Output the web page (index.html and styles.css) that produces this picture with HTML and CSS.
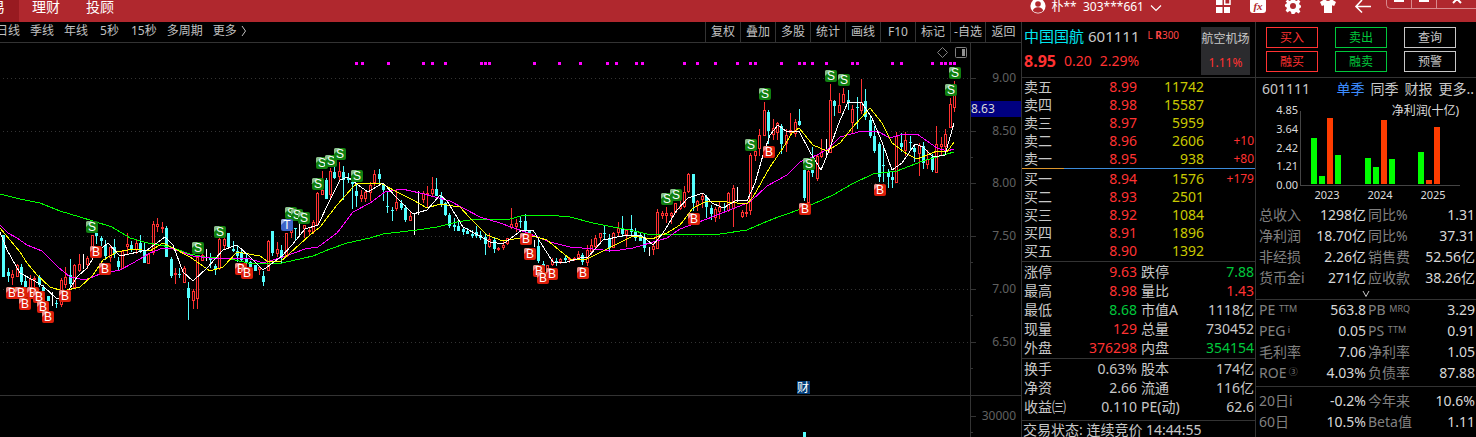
FILE: index.html
```html
<!DOCTYPE html>
<html lang="zh-CN">
<head>
<meta charset="utf-8">
<title>中国国航 601111</title>
<link rel="stylesheet" href="styles.css">
</head>
<body>
<header class="topbar">
  <nav class="tabs">
    <a class="tab tab-active" href="#">交易</a>
    <a class="tab" href="#">理财</a>
    <a class="tab" href="#">投顾</a>
  </nav>
  <div class="account">
    <svg class="avatar" viewBox="0 0 16 16"><circle cx="8" cy="8" r="7.6" fill="#fff"/><circle cx="8" cy="6" r="2.8" fill="#b0282e"/><path d="M3 13c0-5 10-5 10 0-2.800 2.300-7.200 2.300-10 0z" fill="#b0282e"/></svg>
    <span>朴**&nbsp; 303***661</span>
    <svg class="caret" viewBox="0 0 12 8"><path d="M1 1.500l5 5 5-5" fill="none" stroke="#fff" stroke-width="1.200"/></svg>
  </div>
  <div class="tools">
    <button class="tool" aria-label="应用"><svg viewBox="0 0 16 16"><path d="M1 0h6.500v5H1zM1 7h6.500v6H1zM9 7h6v6H9z" fill="#fff"/><path d="M9.700 0v4.300H15V0" fill="none" stroke="#fff" stroke-width="1.500"/></svg></button>
    <button class="tool" aria-label="公式"><svg viewBox="0 0 16 16"><rect y="-2" width="16" height="15" rx="3" fill="#fff"/><text x="8" y="10" class="fx">fx</text></svg></button>
    <button class="tool" aria-label="设置"><svg viewBox="0 0 16 16"><path transform="translate(0 -2)" d="M6.500 0h3l.5 2.300 1.500.6 2-1.300 1.900 1.900-1.300 2 .6 1.500 1.300.5v2l-1.300.5-.6 1.500 1.300 2-1.900 1.900-2-1.300-1.500.6L9.500 16h-3L6 13.700l-1.500-.6-2 1.300-1.900-1.900 1.300-2L1.300 9 0 8.500v-2L1.300 6l.6-1.500L.6 3.500 2.500 1.600l2 1.300L6 2.300z" fill="#fff"/><circle cx="8" cy="6" r="3" fill="#b0282e"/></svg></button>
    <button class="tool" aria-label="皮肤"><svg viewBox="0 0 16 16"><path d="M5-1c1 2.500 5 2.500 6 0l5 3-1.800 4-2.200-.8V13H4V5.200L1.800 6 0 2z" fill="#fff"/></svg></button>
    <button class="tool" aria-label="返回"><svg viewBox="0 0 16 16"><path d="M16 6.500H1M7 0L1 6.500 7 12.500" fill="none" stroke="#fff" stroke-width="1.600"/></svg></button>
  </div>
  <div class="window">
    <button aria-label="最小化"><svg viewBox="0 0 10 10"><path d="M0 0h10v2H0z" fill="#fff"/></svg></button>
    <button aria-label="最大化"><svg viewBox="0 0 10 10"><path d="M0 0h10v2H0z" fill="#fff"/></svg></button>
    <button class="close" aria-label="关闭"><svg viewBox="0 0 10 10"><path d="M1 3l4-4 4 4" fill="none" stroke="#fff" stroke-width="2"/></svg></button>
  </div>
</header>

<main class="main">
  <section class="chart">
    <div class="toolbar">
      <div class="periods">
        <button>日线</button><button>季线</button><button>年线</button><button class="short">5秒</button><button class="short">15秒</button><button>多周期</button><button class="more">更多
          <svg viewBox="0 0 6 12"><path d="M1 1l3.500 5L1 11" fill="none" stroke="#c0c0c0"/></svg></button>
      </div>
      <div class="actions">
        <button>复权</button><button>叠加</button><button>多股</button><button>统计</button><button>画线</button><button>F10</button><button>标记</button><button>-自选</button><button>返回</button>
      </div>
    </div>
    <svg class="kline" id="kline" viewBox="0 43 1021 394" preserveAspectRatio="xMaxYMin slice"></svg>
  </section>

  <section class="quote">
    <div class="head">
      <div>
        <div class="name"><b>中国国航</b><span>601111</span><small>L <strong>R</strong>300</small></div>
        <div class="price red"><b>8.95</b><span>0.20</span><span>2.29%</span></div>
      </div>
      <div class="sector"><span>航空机场</span><span class="red">1.11%</span></div>
    </div>
    <table class="book">
      <tr><th>卖五</th><td>8.99</td><td>11742</td><td></td></tr>
      <tr><th>卖四</th><td>8.98</td><td>15587</td><td></td></tr>
      <tr><th>卖三</th><td>8.97</td><td>5959</td><td></td></tr>
      <tr><th>卖二</th><td>8.96</td><td>2606</td><td>+10</td></tr>
      <tr><th>卖一</th><td>8.95</td><td>938</td><td>+80</td></tr>
    </table>
    <div class="ratio"><i></i></div>
    <table class="book bids">
      <tr><th>买一</th><td>8.94</td><td>1576</td><td>+179</td></tr>
      <tr><th>买二</th><td>8.93</td><td>2501</td><td></td></tr>
      <tr><th>买三</th><td>8.92</td><td>1084</td><td></td></tr>
      <tr><th>买四</th><td>8.91</td><td>1896</td><td></td></tr>
      <tr><th>买五</th><td>8.90</td><td>1392</td><td></td></tr>
    </table>
    <table class="stats">
      <tr><th>涨停</th><td class="red">9.63</td><th>跌停</th><td class="green">7.88</td></tr>
      <tr><th>最高</th><td class="red">8.98</td><th>量比</th><td class="red">1.43</td></tr>
      <tr><th>最低</th><td class="green">8.68</td><th>市值A</th><td>1118亿</td></tr>
      <tr><th>现量</th><td class="red">129</td><th>总量</th><td>730452</td></tr>
      <tr><th>外盘</th><td class="red">376298</td><th>内盘</th><td class="green">354154</td></tr>
    </table>
    <table class="stats">
      <tr><th>换手</th><td>0.63%</td><th>股本</th><td>174亿</td></tr>
      <tr><th>净资</th><td>2.66</td><th>流通</th><td>116亿</td></tr>
      <tr><th>收益㈢</th><td>0.110</td><th>PE(动)</th><td>62.6</td></tr>
    </table>
    <div class="status">交易状态: 连续竞价 14:44:55</div>
  </section>

  <section class="finance">
    <div class="trade">
      <button class="red">买入</button><button class="green">卖出</button><button>查询</button>
      <button class="red">融买</button><button class="green">融卖</button><button>预警</button>
    </div>
    <div class="report">
      <span class="code">601111</span>
      <button class="on">单季</button><button>同季</button><button>财报</button><button>更多..</button>
    </div>
    <svg class="profit" id="profit" viewBox="1256 101 220 103"></svg>
    <table class="fin">
      <tr><th>总收入</th><td>1298亿</td><th>同比%</th><td>1.31</td></tr>
      <tr><th>净利润</th><td>18.70亿</td><th>同比%</th><td>37.31</td></tr>
      <tr><th>非经损</th><td>2.26亿</td><th>销售费</th><td>52.56亿</td></tr>
      <tr><th>货币金i</th><td>271亿</td><th>应收款</th><td>38.26亿</td></tr>
    </table>
    <button class="expand" aria-label="展开"><svg viewBox="0 0 8 8"><path d="M1 1l3 5.500L7 1" fill="none" stroke="#c8c8c8"/></svg></button>
    <table class="fin ratios">
      <tr><th>PE <sup>TTM</sup></th><td>563.8</td><th>PB <sup>MRQ</sup></th><td>3.29</td></tr>
      <tr><th>PEG<sup> i</sup></th><td>0.05</td><th>PS <sup>TTM</sup></th><td>0.91</td></tr>
      <tr><th>毛利率</th><td>7.06</td><th>净利率</th><td>1.05</td></tr>
      <tr><th>ROE<sup> ③</sup></th><td>4.03%</td><th>负债率</th><td>87.88</td></tr>
    </table>
    <table class="fin returns">
      <tr><th>20日i</th><td>-0.2%</td><th>今年来</th><td>10.6%</td></tr>
      <tr><th>60日</th><td>10.5%</td><th>Beta值</th><td>1.11</td></tr>
    </table>
  </section>
</main>
<script src="chart.js"></script>
</body>
</html>
```
FILE: styles.css
```css
* { box-sizing: border-box; }
body {
  margin: 0;
  min-height: 100vh;
  display: flex;
  flex-direction: column;
  background: #000;
  color: #c8c8c8;
  font: 14px/18px "Noto Sans", "Noto Sans CJK SC", sans-serif;
  overflow: hidden;
}
button { border: 0; padding: 0; background: none; color: inherit; font: inherit; white-space: nowrap; }
svg { display: block; }
table { border-collapse: collapse; width: 100%; table-layout: fixed; }
th { font-weight: 400; text-align: left; padding: 0; white-space: nowrap; }
td { text-align: right; padding: 0; white-space: nowrap; }
.red { color: #ff3232; }
.green { color: #00c83c; }

.topbar { height: 22px; display: flex; background: #b0282e; color: #fff; overflow: hidden; }
.tabs { display: flex; flex: 1; }
.tab { color: #fff; text-decoration: none; line-height: 14px; padding: 0 13px; white-space: nowrap; }
.tab-active { flex: none; width: 19px; padding: 0 14px 0 0; display: flex; justify-content: flex-end; background: #981a20; overflow: hidden; }
.account { display: flex; gap: 6px; font-size: 12px; line-height: 13px; padding-right: 53px; }
.avatar { width: 16px; height: 16px; margin-top: -2px; }
.caret { width: 12px; height: 8px; margin-top: 4px; }
.tools { display: flex; gap: 19px; padding-right: 15px; }
.tool svg { width: 16px; height: 16px; overflow: visible; }
.tool { height: 16px; }
.fx { font: italic 700 11px "Liberation Serif", serif; fill: #b0282e; text-anchor: middle; }
.window { display: flex; height: 9px; width: 90px; border: 1px solid #d98a8d; border-width: 0 0 1px 1px; border-radius: 0 0 0 5px; }
.window button { width: 25px; height: 8px; border-right: 1px solid #d98a8d; display: flex; justify-content: center; }
.window .close { flex: 1; border: 0; }
.window svg { width: 10px; height: 10px; }

.main { flex: 1; display: flex; }
.chart { flex: 1; min-width: 0; display: flex; flex-direction: column; }
.toolbar { height: 21px; display: flex; justify-content: space-between; border-bottom: 1px solid #333; font-size: 12px; line-height: 18px; color: #c0c0c0; }
.periods { display: flex; align-items: flex-start; gap: 10px; margin-left: -4px; }
.periods .short { padding-left: 2px; }
.periods .more { display: flex; align-items: center; gap: 4px; }
.more svg { width: 6px; height: 12px; }
.actions { display: flex; }
.actions button { width: 35px; border-left: 1px solid #333; }
.actions button:last-child { width: 36px; }
.kline { width: 100%; flex: 1; min-height: 0; }
.kline .axis { font-size: 12px; fill: #606060; text-anchor: end; }
.kline .last { font-size: 12px; fill: #d8d8d8; }
.kline .mark { font: 12px "Liberation Sans", sans-serif; fill: #fff; text-anchor: middle; }
.kline .event { font-size: 12px; fill: #fff; text-anchor: middle; }

.quote { width: 234px; border-left: 1px solid #333; }
.head { display: flex; justify-content: space-between; height: 56px; padding: 5px 5px 0 2px; border-bottom: 1px solid #333; }
.name { display: flex; line-height: 18px; font-size: 15px; white-space: nowrap; }
.name b { color: #00e5f0; font-weight: 400; }
.name span { margin: 0 8px 0 4px; }
.name small { color: #ff4646; font-size: 10px; line-height: 16px; }
.price { display: flex; gap: 8px; line-height: 32px; }
.price b { font-size: 16px; }
.sector { width: 49px; height: 48px; background: #2b2b2e; display: flex; flex-direction: column; align-items: center; font-size: 12px; line-height: 24px; white-space: nowrap; }
.book tr { height: 18px; }
.book th { width: 62px; padding-left: 2px; }
.book td { color: #ff3232; padding-right: 1px; }
.book td:nth-child(2) { width: 54px; }
.book td:nth-child(3) { width: 67px; color: #c8c800; }
.book td:nth-child(4) { font-size: 12px; }
.ratio { height: 1px; background: #3c8cdc; }
.ratio i { display: block; width: 18%; height: 1px; background: #dc962d; }
.bids { margin-top: 1px; }
.bids + .stats { margin-top: 1px; }
.stats { border-top: 1px solid #333; line-height: 18px; border-collapse: separate; border-spacing: 0; padding-bottom: 1px; }
.stats tr { height: 19px; }
.stats th:first-child { width: 56px; padding-left: 2px; }
.stats td:nth-child(2) { width: 59px; }
.stats th:nth-child(3) { width: 54px; padding-left: 4px; }
.stats td:last-child { padding-right: 1px; }
.status { border-top: 1px solid #333; height: 17px; line-height: 18px; padding-left: 1px; white-space: nowrap; margin-top: 3px; }

.finance { width: 221px; border-left: 1px solid #333; }
.trade { display: grid; grid-template-columns: repeat(3, 52px); gap: 3px 17px; padding: 5px 0 5px 10px; border-bottom: 1px solid #333; }
.trade button { height: 21px; border: 1px solid currentColor; font-size: 12px; line-height: 17px; }
.report { display: flex; align-items: flex-start; gap: 6px; padding: 2px 2px 0 6px; height: 23px; line-height: 18px; }
.report button { height: 18px; line-height: 16px; }
.report .code { flex: 1; }
.report .on { color: #3c8cff; }
.profit { width: 100%; }
.profit text { font-size: 11px; fill: #dcdcdc; }
.fin tr { height: 21px; }
.fin th { color: #808080; padding-left: 3px; }
.fin td { padding-right: 1px; color: #d8d8d8; }
.fin th:first-child { width: 54px; }
.fin td:nth-child(2) { width: 56px; padding-right: 0; }
.fin th:nth-child(3) { width: 52px; padding-left: 2px; }
.fin sup { font-size: 9px; line-height: 9px; vertical-align: 3px; }
.expand { display: block; width: 8px; height: 11px; margin: 0 auto; padding-top: 1px; }
.expand svg { width: 8px; height: 8px; }
.ratios, .returns { border-top: 1px solid #333; }
.returns { margin-top: 2px; border-collapse: separate; border-spacing: 0; padding-top: 4px; }
```
FILE: chart.js
```js
const NS = "http://www.w3.org/2000/svg";
function add(parent, tag, attrs, text) {
  const el = document.createElementNS(NS, tag);
  for (const k in attrs) el.setAttribute(k, attrs[k]);
  if (text) el.textContent = text;
  parent.appendChild(el);
  return el;
}

// Candles: x, high, body top, body bottom, low, kind (r rising, c falling, w flat)
const candles = `3,235,235,277,277,c 8,268,272,276,282,c 12,270,274,278,285,r 17,264,265,277,277,r 21,264,267,282,285,c 25,277,281,287,287,c
30,275,279,292,292,r 34,276,278,280,288,r 39,275,277,285,287,c 43,285,287,291,291,c 48,296,296,301,301,c 52,292,292,306,306,w
56,300,303,304,308,c 61,278,280,305,307,r 65,267,277,285,288,r 70,259,275,284,288,c 74,264,265,288,288,r 79,254,264,271,272,r
83,254,254,269,269,w 87,256,258,265,269,r 92,235,235,255,255,r 96,233,233,236,244,c 101,236,238,241,246,c 105,240,245,256,260,c
110,245,247,258,262,r 114,239,247,254,258,c 118,257,261,267,270,c 122,250,251,269,269,r 127,233,244,247,255,r 131,241,245,249,252,c
136,239,243,250,254,r 140,235,243,251,253,c 144,242,251,263,263,c 148,253,254,264,264,r 153,221,224,253,255,r 157,218,224,227,232,r
162,222,227,229,233,r 166,226,228,257,257,c 171,257,259,276,278,c 175,268,273,275,284,r 179,268,274,275,278,c 184,266,268,283,283,r
188,282,288,298,320,c 193,289,291,301,309,r 197,256,257,299,309,r 202,253,255,261,261,r 206,249,249,261,261,w 210,253,258,260,268,c
215,264,266,269,275,c 219,238,239,269,270,r 224,237,239,246,250,r 228,233,233,247,247,c 233,241,249,251,252,c 237,245,251,256,262,c
241,250,253,260,262,c 246,253,258,262,269,c 250,261,262,267,267,c 255,265,265,271,271,c 259,266,267,270,275,r 263,271,276,282,286,c
268,240,241,271,271,r 272,231,231,253,256,c 277,242,249,254,257,r 281,245,250,257,263,c 286,233,233,257,257,r 291,230,230,233,238,r
295,228,228,229,240,c 299,222,222,236,236,w 304,225,225,229,238,r 309,227,230,232,236,r 313,220,222,232,234,r 317,192,193,225,225,r
322,171,190,195,195,r 326,178,180,199,199,c 330,168,171,195,198,r 334,167,172,178,179,c 339,162,171,177,180,r 343,166,172,180,200,c
348,173,178,180,183,c 352,180,182,184,209,c 356,185,191,196,207,c 361,190,195,199,202,r 365,190,192,199,202,r 370,182,185,193,201,r
374,170,174,183,186,r 379,169,174,179,183,c 383,183,184,190,201,c 387,192,206,207,213,c 392,207,210,211,221,c 396,190,202,209,211,r
401,200,203,208,210,c 405,205,208,220,222,c 410,212,216,221,221,r 414,213,213,235,235,w 418,191,191,215,215,w 423,191,193,200,203,r
427,186,193,195,207,r 432,177,189,194,197,r 436,178,189,196,196,c 441,192,196,205,207,c 445,202,203,215,216,c 449,213,215,226,228,c
454,218,225,227,231,c 458,221,226,231,231,c 463,227,229,232,235,c 467,228,231,234,234,c 472,230,234,236,238,c 476,226,232,236,238,c
480,231,235,238,240,c 485,233,237,244,255,c 489,233,239,247,248,r 494,237,240,249,253,c 498,247,248,250,251,r 503,240,245,248,250,r
507,238,238,244,245,r 511,208,224,228,229,r 516,219,223,227,232,r 520,217,221,222,228,c 525,214,221,230,232,c 529,230,231,240,245,c
534,240,240,247,247,w 538,240,246,261,263,c 543,261,264,266,266,c 547,265,265,270,270,r 552,258,261,265,266,r 556,258,261,262,266,c
560,258,259,262,264,r 565,256,258,260,263,c 569,257,258,260,263,r 574,257,258,260,261,r 578,251,254,258,259,r 582,253,255,262,265,c
587,245,250,263,266,r 591,239,245,252,255,r 595,235,238,247,249,r 600,233,233,238,242,r 604,226,233,234,240,c 609,234,239,248,252,c
613,232,233,248,248,r 618,222,228,233,237,r 622,216,229,234,237,c 626,229,230,235,247,r 631,215,229,232,235,c 635,228,231,238,241,c
640,233,235,241,241,c 644,234,238,248,252,c 649,247,247,256,256,w 653,243,246,250,255,r 657,209,212,249,249,r 662,211,213,216,219,r
666,207,213,216,223,r 671,212,213,216,224,r 675,203,203,213,213,r 680,200,206,209,210,r 684,186,192,207,208,r 688,173,174,192,193,r
693,174,174,203,211,c 697,200,201,206,211,r 702,193,196,200,208,r 706,195,197,207,218,c 711,205,208,214,220,c 715,207,209,218,222,r
719,201,207,212,219,r 724,203,207,208,213,c 728,192,193,211,212,r 733,185,188,209,227,r 737,187,187,202,202,w 742,210,212,217,218,r
746,203,212,213,217,r 750,153,155,211,215,r 755,150,151,156,161,r 759,129,135,149,156,r 764,102,110,136,136,r 768,110,112,131,144,c
773,119,128,135,140,r 777,122,123,133,140,r 781,124,126,144,154,c 786,129,135,144,152,r 790,113,130,133,136,r 795,119,122,134,137,r
799,109,121,125,126,c 804,168,170,198,201,c 808,170,171,203,203,r 812,147,170,173,177,c 817,154,156,179,181,r 821,139,152,157,158,r
826,139,139,157,157,w 830,84,100,153,153,r 834,100,101,106,116,c 839,93,105,113,113,r 843,88,94,103,103,r 848,90,100,103,110,c
852,105,109,123,133,r 857,97,107,108,129,c 861,79,102,111,114,r 865,89,101,117,120,c 870,115,120,136,138,c 874,126,136,151,153,c
879,142,144,177,182,c 883,147,165,166,182,c 888,169,172,177,188,c 892,172,177,180,188,c 896,132,136,183,183,r 901,133,143,147,152,c
905,132,140,151,156,r 910,136,142,143,150,c 914,145,148,152,162,c 919,143,145,154,176,r 923,142,146,163,169,c 927,150,159,165,169,r
932,154,157,170,172,c 936,126,144,173,173,r 941,137,144,147,156,r 945,129,134,147,150,r 950,98,104,128,128,r 954,81,85,108,112,r`;

// Moving averages
const averages = {
  "#00ff00": "0,194 20,199 40,203 60,211 80,217 93,221 112,227 130,238 148,243 170,247 190,254 205,257 230,259 253,264 282,263 313,256 330,249 347,243 370,238 383,234 417,230 437,227 457,222 470,220 510,219 525,215 548,215 570,217 593,223 613,227 630,230 647,234 720,234 747,230 763,223 778,217 790,213 813,204 833,195 852,184 873,174 897,171 923,161 940,156 954,152",
  "#ff00ff": "0,225 8,233 17,238 27,245 42,251 58,267 70,277 85,280 100,274 120,270 133,263 150,253 163,248 173,249 193,256 210,258 247,258 263,263 283,257 305,249 318,247 337,233 353,212 370,203 385,192 402,189 420,193 450,201 480,217 500,223 525,232 550,242 570,247 593,249 613,251 633,248 650,243 667,238 680,229 707,219 727,211 750,202 767,186 787,175 800,162 817,155 828,149 840,137 862,131 877,131 890,138 903,134 917,134 937,148 947,151 954,149",
  "#ffff00": "0,228 10,240 20,252 27,263 37,275 50,287 63,291 80,287 93,275 103,260 117,252 133,249 150,251 163,243 173,248 190,257 210,271 223,267 237,252 260,256 267,261 280,262 290,253 310,235 320,227 337,205 353,187 358,183 382,184 397,192 413,200 427,208 440,204 460,207 470,218 487,235 503,241 520,238 533,236 547,240 570,259 585,260 603,251 633,236 652,239 667,233 680,225 693,208 707,201 727,202 747,204 753,197 770,167 783,148 792,133 799,128 813,145 827,151 840,143 852,128 870,108 882,123 892,143 907,154 917,159 937,151 947,152 954,142",
  "#ffffff": "0,232 7,250 20,273 33,280 43,286 57,299 67,293 77,277 87,268 97,252 108,243 120,256 147,250 165,237 173,245 183,272 193,281 207,268 223,250 237,245 250,257 263,270 282,256 292,245 305,229 318,225 330,200 340,180 348,177 358,185 368,192 383,183 397,198 413,214 427,210 440,195 447,201 463,227 480,236 490,242 503,244 522,230 533,230 542,245 553,262 567,262 580,258 588,257 603,240 627,235 642,236 653,245 663,233 677,210 688,198 703,193 712,203 723,208 737,200 747,201 755,183 763,155 770,135 778,125 787,132 799,131 810,152 821,170 830,148 838,125 848,102 862,103 872,118 882,142 892,170 902,163 915,144 923,147 933,157 945,155 954,123"
};

const marks = {
  S: "92,227 198,248 220,232 291,213 297,215 304,218 318,184 322,163 331,161 340,154 357,176 667,199 676,195 765,94 751,145 809,164 831,76 844,80 955,73 951,90",
  B: "12,293 21,293 25,304 33,293 39,297 43,307 48,317 65,296 96,252 105,269 241,269 247,273 526,239 530,254 539,271 543,278 552,274 583,273 694,219 769,152 805,209 880,190",
  T: "287,225"
};
const markColors = { S: "#108010", B: "#dc1e0a", T: "#3c64c8" };
const signals = [354,360,386,421,430,443,479,483,487,532,557,578,605,614,634,640,682,695,713,735,748,753,779,797,802,810,824,850,855,890,899,930,939,943,948,952];

const k = document.getElementById("kline");
const crisp = { "shape-rendering": "crispEdges" };
const base = add(k, "g", crisp);
const line = (d, extra) => add(base, "path", Object.assign({ d, stroke: "#333", fill: "none" }, extra));
line("M970.5 43V437M0 395.5H1021");
[["9.00", 78], ["8.50", 131], ["8.00", 183], ["7.50", 236], ["7.00", 289], ["6.50", 342]].forEach(([label, y]) => {
  line(`M3 ${y}.5H970`, { "stroke-dasharray": "1 3" });
  line(`M970 ${y}.5H976M970 ${y + 26}.5H973`);
  add(k, "text", { x: 1016, y: y + 4, class: "axis" }, label);
});
line("M970 416.5H976M970 432.500H973");
add(k, "text", { x: 1016, y: 420, class: "axis" }, "30000");
add(base, "rect", { x: 971, y: 101, width: 50, height: 16, fill: "#000080" });
add(k, "text", { x: 971, y: 113, class: "last" }, "8.63");
signals.forEach(x => add(base, "rect", { x: x + 1, y: 62, width: 3, height: 3, fill: "#ff00ff" }));

const colors = { r: "#ff3232", c: "#54ffff", w: "#ffffff" };
candles.split(/\s+/).forEach(row => {
  const p = row.split(",");
  const [x, high, top, bottom, low] = p.map(Number);
  const stroke = colors[p[5]];
  line(p[5] === "r" ? `M${x}.5 ${high}V${top}M${x}.5 ${bottom}V${low}` : `M${x}.5 ${high}V${low}`, { stroke });
  if (p[5] === "r") add(base, "rect", { x: x - 0.5, y: top + 0.5, width: 2, height: Math.max(bottom - top - 1, 1), fill: "#000", stroke });
  if (p[5] === "c") add(base, "rect", { x: x - 1, y: top, width: 3, height: Math.max(bottom - top, 1), fill: stroke });
});
add(base, "rect", { x: 803, y: 432, width: 3, height: 5, fill: colors.c });
for (const stroke in averages) add(k, "polyline", Object.assign({ points: averages[stroke], stroke, fill: "none" }, crisp));

for (const type in marks) {
  marks[type].split(" ").forEach(point => {
    const [x, y] = point.split(",").map(Number);
    add(k, "rect", { x: x - 6, y: y - 6, width: 12, height: 12, rx: 2, fill: markColors[type] });
    add(k, "path", { d: `M${x - 6} ${y}V${y - 5}L${x - 5} ${y - 6}H${x}Z`, fill: "#fff", opacity: 0.5 });
    add(k, "text", { x, y: y + 4, class: "mark" }, type);
  });
}
add(k, "rect", { x: 797, y: 381, width: 13, height: 13, fill: "#003c78" });
add(k, "text", { x: 803, y: 392, class: "event" }, "财");
add(k, "path", { d: "M942.500 47.500l5 5-5 5-5-5z", fill: "none", stroke: "#808080" });
add(k, "rect", { x: 955.5, y: 47.5, width: 11, height: 10, rx: 1, fill: "none", stroke: "#808080" });
add(k, "rect", { x: 962, y: 49, width: 3, height: 7, fill: "#909090" });

// Quarterly net profit
const p = document.getElementById("profit");
add(p, "path", Object.assign({ d: "M1300.5 111V185.500H1460", stroke: "#444", fill: "none" }, crisp));
[["4.85", 114], ["3.64", 133], ["2.42", 152], ["1.21", 170], ["0.00", 189]].forEach(([t, y]) =>
  add(p, "text", { x: 1298, y, "text-anchor": "end" }, t));
[["2023", 1327], ["2024", 1380], ["2025", 1433]].forEach(([t, x]) =>
  add(p, "text", { x, y: 199, "text-anchor": "middle" }, t));
[[1311,138,0],[1319,176,0],[1327,118,1],[1335,155,0],[1365,158,0],[1373,167,0],[1381,120,1],[1389,159,0],[1418,152,0],[1426,180,1],[1434,127,1]].forEach(([x, y, up]) =>
  add(p, "rect", { x, y, width: 6, height: 184 - y, fill: up ? "#ff3c00" : "#00ff00" }));
const title = add(p, "text", { x: 1459, y: 115, "text-anchor": "end" }, "净利润(十亿)");
title.style.fontSize = "12px";
```
